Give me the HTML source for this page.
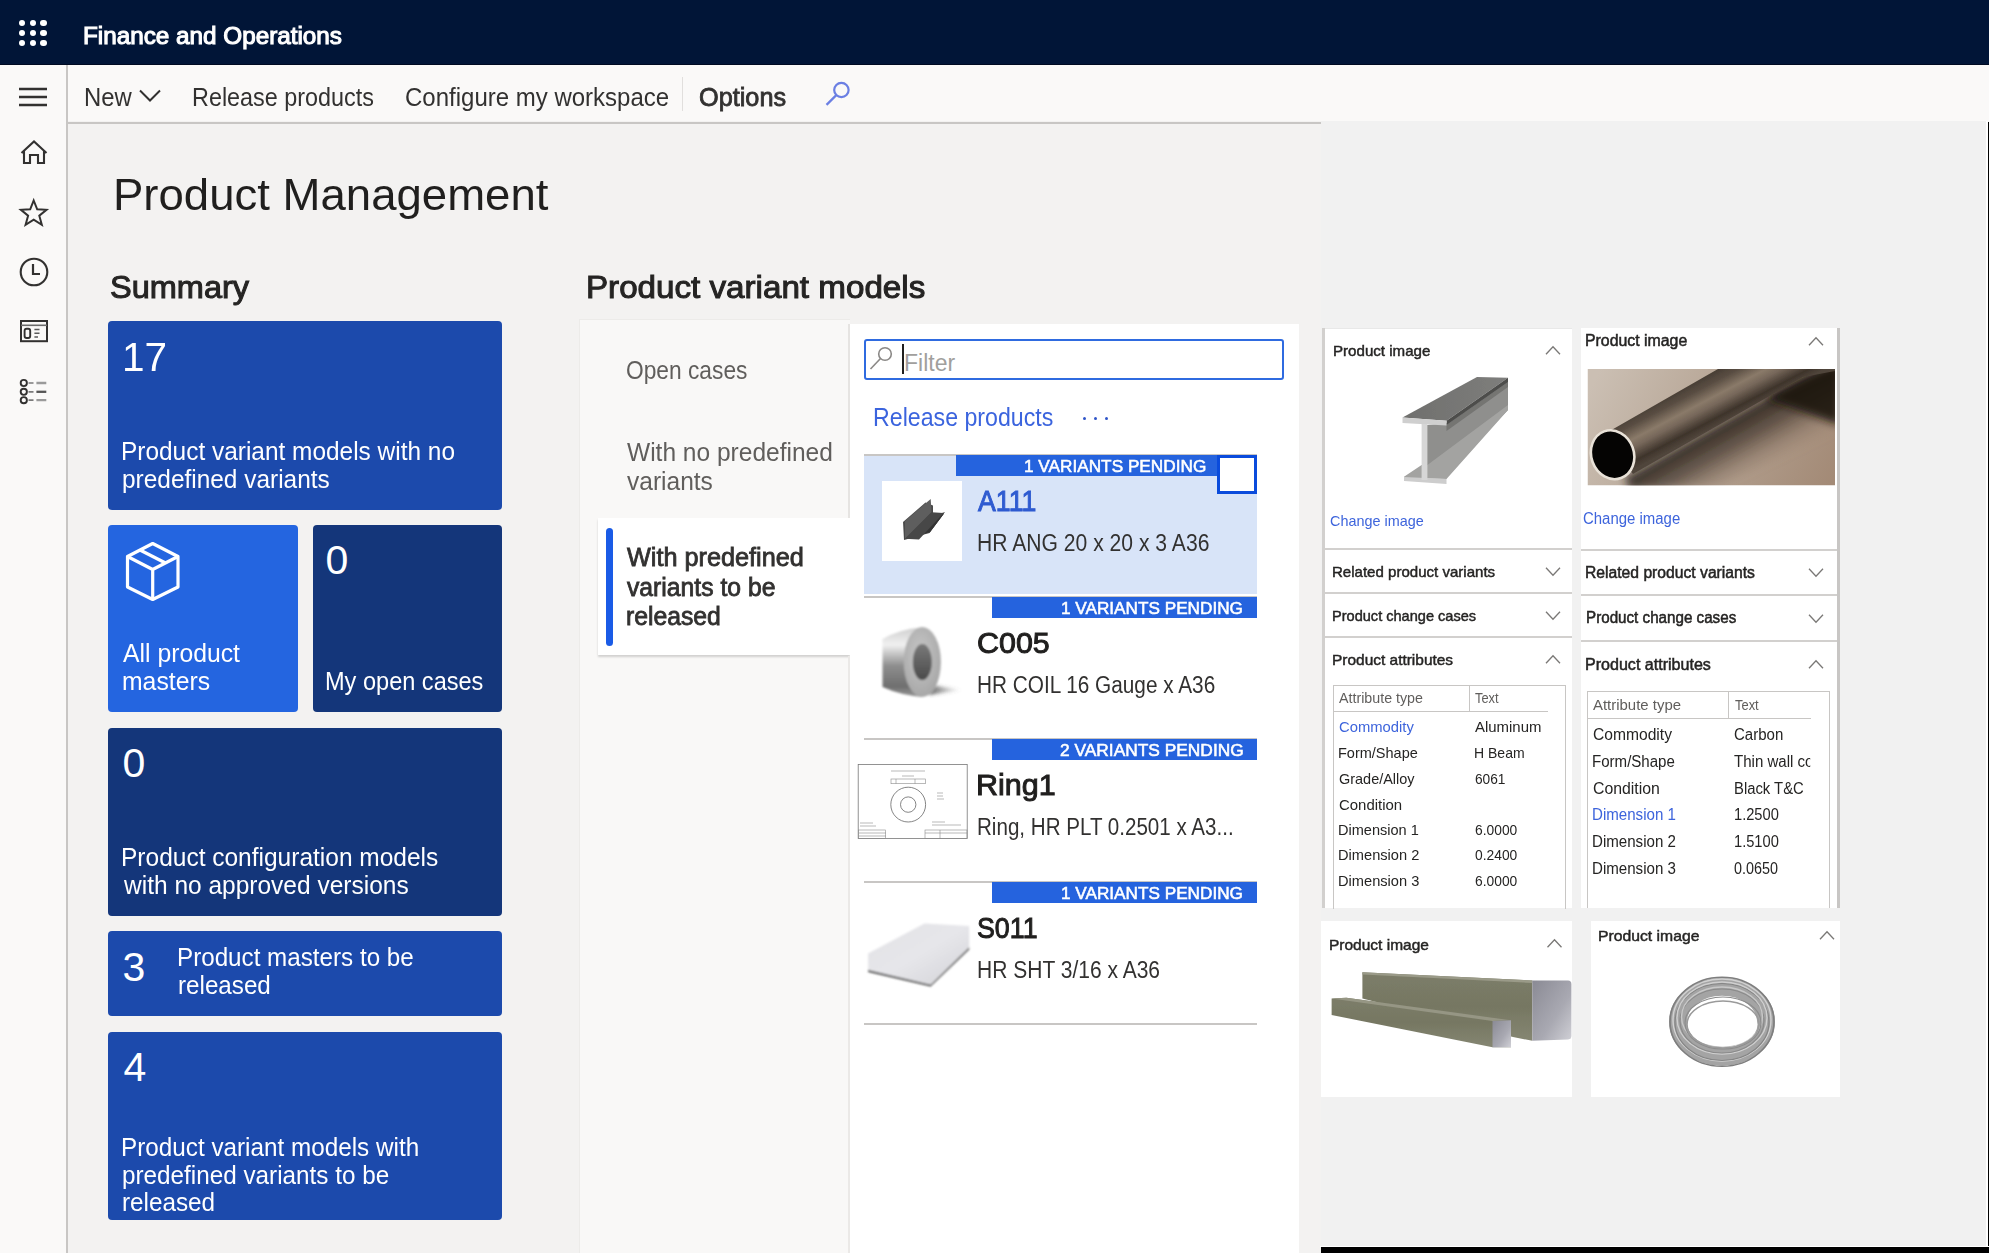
<!DOCTYPE html>
<html><head><meta charset="utf-8"><style>
*{margin:0;padding:0;box-sizing:border-box}
html,body{width:1989px;height:1253px;overflow:hidden;background:#f3f2f1;font-family:"Liberation Sans", sans-serif}
.a{position:absolute}
.t{position:absolute;white-space:nowrap;line-height:1;transform-origin:0 0}
</style></head><body>
<div class="a" style="left:1321px;top:121px;width:668px;height:1132px;background:#f1f1f1;"></div>
<div class="a" style="left:0px;top:0px;width:1989px;height:64px;background:#011537;"></div>
<div class="a" style="left:0px;top:64px;width:1989px;height:1px;background:#000a22;"></div>
<div class="a" style="left:0px;top:65px;width:68px;height:1188px;background:#faf9f8;"></div>
<div class="a" style="left:66px;top:65px;width:2px;height:1188px;background:#c8c6c4;"></div>
<div class="a" style="left:68px;top:65px;width:1921px;height:56px;background:#faf9f8;"></div>
<div class="a" style="left:68px;top:122px;width:1253px;height:2px;background:#c8c6c4;"></div>
<div class="a" style="left:682px;top:77px;width:1px;height:34px;background:#e1dfdd;"></div>
<div class="a" style="left:1986px;top:121px;width:2px;height:1132px;background:#ffffff;"></div>
<div class="a" style="left:1988px;top:121.5px;width:1px;height:1131.5px;background:#000000;"></div>
<div class="a" style="left:1320px;top:1246px;width:669px;height:1px;background:#ffffff;"></div>
<div class="a" style="left:1321px;top:1247px;width:668px;height:6px;background:#000000;"></div>
<div class="a" style="left:19.3px;top:19.9px;width:6.2px;height:6.2px;border-radius:50%;background:#fff"></div>
<div class="a" style="left:30.1px;top:19.9px;width:6.2px;height:6.2px;border-radius:50%;background:#fff"></div>
<div class="a" style="left:40.4px;top:19.9px;width:6.2px;height:6.2px;border-radius:50%;background:#fff"></div>
<div class="a" style="left:19.3px;top:30.1px;width:6.2px;height:6.2px;border-radius:50%;background:#fff"></div>
<div class="a" style="left:30.1px;top:30.1px;width:6.2px;height:6.2px;border-radius:50%;background:#fff"></div>
<div class="a" style="left:40.4px;top:30.1px;width:6.2px;height:6.2px;border-radius:50%;background:#fff"></div>
<div class="a" style="left:19.3px;top:40.3px;width:6.2px;height:6.2px;border-radius:50%;background:#fff"></div>
<div class="a" style="left:30.1px;top:40.3px;width:6.2px;height:6.2px;border-radius:50%;background:#fff"></div>
<div class="a" style="left:40.4px;top:40.3px;width:6.2px;height:6.2px;border-radius:50%;background:#fff"></div>
<svg class="a" style="left:0;top:66px" width="66" height="360" viewBox="0 66 66 360" fill="none" stroke="#323130" stroke-width="2.1">
<path d="M19 89H47M19 97H47M19 105H47" stroke-width="2.6"/>
<path d="M21.5 153L34 141.5L46.5 153M24 151V163H30V155H38V163H44V151" stroke-linejoin="miter"/>
<path d="M33.7 200.5L37.2 209.3L46.5 209.8L39.3 215.7L41.8 224.8L33.7 219.6L25.6 224.8L28.1 215.7L20.9 209.8L30.2 209.3Z" stroke-width="2" stroke-linejoin="miter"/>
<circle cx="34" cy="272" r="13.3" stroke-width="2.1"/>
<path d="M33 264V274H40" stroke-width="2.2"/>
<rect x="21" y="321" width="26" height="20.2" stroke-width="2"/>
<path d="M21 325.3H47" stroke-width="1.6" stroke="#6a6a6a"/>
<rect x="24.6" y="328.8" width="5.6" height="9.2" rx="2" stroke-width="1.9"/>
<path d="M34.4 329.5H39.5M34.4 333.3H39.5M34.4 337H38" stroke-width="1.6" stroke="#5a5a5a"/>
<circle cx="23.8" cy="383" r="3.1" stroke-width="1.9"/>
<circle cx="23.8" cy="391.8" r="3.1" stroke-width="1.9"/>
<circle cx="23.8" cy="400.2" r="3.1" stroke-width="1.9"/>
<path d="M28.5 383H33.5M28.5 391.8H33.5M28.5 400.2H33.5" stroke-width="1.7" stroke="#7a7a7a"/>
<path d="M36.4 383H46.3M36.4 400.2H46.3" stroke-width="2.3" stroke="#9a9a9a"/>
<path d="M36.4 391.8H46.3" stroke-width="2.3" stroke="#555"/>
</svg>
<svg class="a" style="left:130px;top:80px" width="40" height="30" viewBox="130 80 40 30" fill="none" stroke="#323130" stroke-width="2">
<path d="M140 90.5L150 100.5L160 90.5"/></svg>
<svg class="a" style="left:820px;top:76px" width="35" height="35" viewBox="820 76 35 35" fill="none" stroke="#6b7fe3" stroke-width="2.2">
<circle cx="841.4" cy="90" r="7.2"/><path d="M836.3 95.1L826.5 104.9"/></svg>
<div class="a" style="left:108px;top:320.5px;width:393.5px;height:189.0px;background:#1c4aac;border-radius:4px"></div>
<div class="a" style="left:108px;top:525px;width:190.2px;height:187px;background:#2465e0;border-radius:4px"></div>
<div class="a" style="left:313px;top:525px;width:188.5px;height:187px;background:#14367a;border-radius:4px"></div>
<div class="a" style="left:108px;top:727.5px;width:393.5px;height:188.5px;background:#14367a;border-radius:4px"></div>
<div class="a" style="left:108px;top:931px;width:393.5px;height:85px;background:#1c4aac;border-radius:4px"></div>
<div class="a" style="left:108px;top:1031.5px;width:393.5px;height:188.5px;background:#1c4aac;border-radius:4px"></div>
<svg class="a" style="left:120px;top:536px" width="66" height="70" viewBox="120 536 66 70" fill="none" stroke="#fff" stroke-width="3.2" stroke-linejoin="round">
<path d="M152.7 543.5L178 556.5V587L152.7 599.5L127.5 587V556.5Z"/>
<path d="M127.5 556.5L152.7 569.5L178 556.5M152.7 569.5V599.5"/>
<path d="M140 550L165.5 563"/>
</svg>
<div class="a" style="left:578.5px;top:318.5px;width:271.5px;height:934.5px;background:#ecebe9;"></div>
<div class="a" style="left:580px;top:320px;width:270px;height:933px;background:#f9f8f7;"></div>
<div class="a" style="left:597.5px;top:518px;width:252.5px;height:136.5px;background:#fff;box-shadow:0 1.5px 2px rgba(0,0,0,0.16)"></div>
<div class="a" style="left:605.5px;top:528px;width:7.5px;height:117.5px;background:#1a5be6;border-radius:4px"></div>
<div class="a" style="left:850px;top:324px;width:448.5px;height:929px;background:#ffffff;"></div>
<div class="a" style="left:847.5px;top:324px;width:2.0px;height:194px;background:#e6e4e2;"></div>
<div class="a" style="left:848px;top:656px;width:1.5px;height:597px;background:#ebe9e7;"></div>
<div class="a" style="left:864px;top:338.5px;width:420px;height:41.2px;border:2.3px solid #2f6be0;border-radius:3px;background:#fff"></div>
<svg class="a" style="left:866px;top:342px" width="32" height="34" viewBox="866 342 32 34" fill="none" stroke="#8a8886" stroke-width="1.6">
<circle cx="885" cy="354" r="6.3"/><path d="M880.5 358.5L870.5 369"/></svg>
<div class="a" style="left:901.5px;top:344px;width:2.2999999999999545px;height:30px;background:#201f1e;"></div>
<div class="a" style="left:1082.5px;top:416.7px;width:3.6px;height:3.6px;border-radius:50%;background:#2f55c8"></div>
<div class="a" style="left:1093.5px;top:416.7px;width:3.6px;height:3.6px;border-radius:50%;background:#2f55c8"></div>
<div class="a" style="left:1104.5px;top:416.7px;width:3.6px;height:3.6px;border-radius:50%;background:#2f55c8"></div>
<div class="a" style="left:864px;top:455px;width:392.5px;height:139px;background:#d8e4f8;"></div>
<div class="a" style="left:864px;top:454px;width:393px;height:2px;background:#c8c6c4;"></div>
<div class="a" style="left:955.7px;top:455px;width:301.29999999999995px;height:21.30000000000001px;background:#2563de;"></div>
<div class="a" style="left:864px;top:596px;width:393px;height:2px;background:#c8c6c4;"></div>
<div class="a" style="left:992px;top:597px;width:265px;height:21.299999999999955px;background:#2563de;"></div>
<div class="a" style="left:864px;top:738px;width:393px;height:2px;background:#c8c6c4;"></div>
<div class="a" style="left:992px;top:739px;width:265px;height:21.299999999999955px;background:#2563de;"></div>
<div class="a" style="left:864px;top:880.6px;width:393px;height:2.0px;background:#c8c6c4;"></div>
<div class="a" style="left:992px;top:881.6px;width:265px;height:21.299999999999955px;background:#2563de;"></div>
<div class="a" style="left:864px;top:1022.7px;width:393px;height:2.0px;background:#c8c6c4;"></div>
<div class="a" style="left:881.5px;top:480.5px;width:80.5px;height:80.0px;background:#ffffff;"></div>
<svg class="a" style="left:881px;top:480px" width="82" height="82" viewBox="881 480 82 82">
<defs><linearGradient id="ag" x1="0" y1="0" x2="1" y2="1"><stop offset="0" stop-color="#555"/><stop offset="1" stop-color="#3a3a3a"/></linearGradient></defs>
<path d="M903 522L925.5 502.5L933 505.5V516L945 512L929.5 533L904 540Z" fill="url(#ag)"/>
<path d="M904 523L926 505L926 519L944 513.5L930 532L905 539Z" fill="#4a4a4a"/>
<path d="M926 519L944 513.5L930 532L907 538Z" fill="#333"/>
</svg>
<div class="a" style="left:1322px;top:328px;width:250px;height:580px;background:#ffffff;"></div>
<div class="a" style="left:1322px;top:328px;width:2.5px;height:580px;background:#d2d0ce;"></div>
<div class="a" style="left:1324.5px;top:328px;width:247.5px;height:1px;background:#e8e8e8;"></div>
<div class="a" style="left:1324.5px;top:547.5px;width:247.5px;height:2.0px;background:#d2d0ce;"></div>
<div class="a" style="left:1324.5px;top:592px;width:247.5px;height:2px;background:#d2d0ce;"></div>
<div class="a" style="left:1324.5px;top:636px;width:247.5px;height:2px;background:#d2d0ce;"></div>
<div class="a" style="left:1333px;top:684.5px;width:232.5px;height:224px;border:1.5px solid #c8c6c4;border-bottom:none"></div>
<div class="a" style="left:1468.5px;top:685px;width:1.2999999999999545px;height:26px;background:#c8c6c4;"></div>
<div class="a" style="left:1334px;top:710.8px;width:213.5px;height:1.5px;background:#c8c6c4;"></div>
<div class="a" style="left:1581px;top:328px;width:256px;height:580px;background:#ffffff;"></div>
<div class="a" style="left:1836.5px;top:328px;width:3.0px;height:580px;background:#c8c6c4;"></div>
<div class="a" style="left:1581px;top:548.5px;width:255.5px;height:2.0px;background:#d2d0ce;"></div>
<div class="a" style="left:1581px;top:594px;width:255.5px;height:2px;background:#d2d0ce;"></div>
<div class="a" style="left:1581px;top:640px;width:255.5px;height:2px;background:#d2d0ce;"></div>
<div class="a" style="left:1587px;top:691px;width:243px;height:217px;border:1.5px solid #c8c6c4;border-bottom:none"></div>
<div class="a" style="left:1727.5px;top:691.5px;width:1.2999999999999545px;height:26.5px;background:#c8c6c4;"></div>
<div class="a" style="left:1588px;top:717.8px;width:223px;height:1.5px;background:#c8c6c4;"></div>
<div class="a" style="left:1321px;top:921px;width:251px;height:175.5px;background:#ffffff;"></div>
<div class="a" style="left:1591px;top:921px;width:249px;height:175.5px;background:#ffffff;"></div>
<svg class="a" style="left:1300px;top:320px" width="560" height="640" viewBox="1300 320 560 640"><path d="M1546.0 354.3L1553.0 346.7L1560.0 354.3" stroke="#7a7876" stroke-width="1.3" fill="none"/><path d="M1546.0 567.7L1553.0 575.3L1560.0 567.7" stroke="#7a7876" stroke-width="1.3" fill="none"/><path d="M1546.0 611.7L1553.0 619.3L1560.0 611.7" stroke="#7a7876" stroke-width="1.3" fill="none"/><path d="M1546.0 663.3L1553.0 655.7L1560.0 663.3" stroke="#7a7876" stroke-width="1.3" fill="none"/><path d="M1809.0 345.3L1816.0 337.7L1823.0 345.3" stroke="#7a7876" stroke-width="1.3" fill="none"/><path d="M1809.0 568.7L1816.0 576.3L1823.0 568.7" stroke="#7a7876" stroke-width="1.3" fill="none"/><path d="M1809.0 614.7L1816.0 622.3L1823.0 614.7" stroke="#7a7876" stroke-width="1.3" fill="none"/><path d="M1809.0 668.3L1816.0 660.7L1823.0 668.3" stroke="#7a7876" stroke-width="1.3" fill="none"/></svg>
<svg class="a" style="left:1300px;top:920px" width="560" height="60" viewBox="1300 920 560 60"><path d="M1547.5 947.3L1554.5 939.7L1561.5 947.3" stroke="#7a7876" stroke-width="1.3" fill="none"/><path d="M1820.0 939.3L1827.0 931.7L1834.0 939.3" stroke="#7a7876" stroke-width="1.3" fill="none"/></svg>
<svg class="a" style="left:850px;top:470px" width="130" height="530" viewBox="850 470 130 530">
<defs>
<linearGradient id="cyl" x1="0" y1="0" x2="0" y2="1"><stop offset="0" stop-color="#cfcfcf"/><stop offset="0.25" stop-color="#f0f0f0"/><stop offset="0.55" stop-color="#8e8e8e"/><stop offset="0.85" stop-color="#6f6f6f"/><stop offset="1" stop-color="#9a9a9a"/></linearGradient>
<radialGradient id="face" cx="0.45" cy="0.4" r="0.7"><stop offset="0" stop-color="#c8c8c8"/><stop offset="1" stop-color="#a2a2a2"/></radialGradient>
<linearGradient id="hole" x1="0" y1="0" x2="0" y2="1"><stop offset="0" stop-color="#7a7a7a"/><stop offset="1" stop-color="#4a4a4a"/></linearGradient>
<linearGradient id="shd" x1="0" y1="0" x2="1" y2="0"><stop offset="0" stop-color="#333" stop-opacity="0.9"/><stop offset="1" stop-color="#777" stop-opacity="0"/></linearGradient>
<linearGradient id="sheet" x1="0" y1="0" x2="1" y2="1"><stop offset="0" stop-color="#e2e2e5"/><stop offset="0.5" stop-color="#e6e6ea"/><stop offset="1" stop-color="#d3d3d7"/></linearGradient>
<filter id="bl1"><feGaussianBlur stdDeviation="0.8"/></filter>
<filter id="bl2"><feGaussianBlur stdDeviation="1.6"/></filter>
</defs>
<path d="M930.7 498.9L905 521.2L905 538.7L931.5 512.2Z" fill="#5e5e5e"/>
<path d="M931.5 512.2L943.6 512.9L919 539.4L905 538.7Z" fill="#474747"/>
<g filter="url(#bl1)">
<path d="M929 695L962 690L925 684Z" fill="url(#shd)" filter="url(#bl2)"/>
<path d="M882.5 639Q900 629 921.5 627.5L922 697Q900 695 882.5 687Z" fill="url(#cyl)"/>
<ellipse cx="922.3" cy="662" rx="18.6" ry="35" fill="url(#face)"/>
<ellipse cx="922.3" cy="662" rx="9.5" ry="18" fill="url(#hole)"/>
</g>
<g fill="none" stroke="#8a8a8a" stroke-width="0.6">
<rect x="858.2" y="764.6" width="109" height="74" stroke-width="0.8" stroke="#777"/>
<circle cx="908.2" cy="804.6" r="17.4" stroke-width="0.8" stroke="#666"/>
<circle cx="908.2" cy="804.6" r="7.7" stroke-width="0.8" stroke="#666"/>
<rect x="891" y="779" width="34.4" height="4.7"/>
<path d="M896 779V783.7M915 779V783.7M891 771H925M902 776H914"/>
<rect x="858.5" y="830" width="27" height="8.5"/>
<rect x="925" y="830" width="42" height="8.5"/>
<path d="M859 833H886M859 836H886M925 833H967M940 830V838.5M860 823H873M860 826H876M932 822H945M932 825H961M937 793H943M937 796H943M937 799H944"/>
</g>
<g filter="url(#bl1)">
<path d="M868.1 969.7L930.6 984.6L969.2 947L969.2 949.5L930.6 986.5L868.1 972Z" fill="#4a4a4a"/>
<path d="M868.1 953.4L924.5 923.6L969.2 926L969.2 947L930.6 984.6L868.1 969.7Z" fill="url(#sheet)"/>
</g>
</svg>
<svg class="a" style="left:1320px;top:360px" width="530" height="140" viewBox="1320 360 530 140">
<defs>
<linearGradient id="pbg" x1="0" y1="0" x2="1" y2="1"><stop offset="0" stop-color="#c3b8ad"/><stop offset="0.5" stop-color="#b2a293"/><stop offset="1" stop-color="#9d8574"/></linearGradient>
<linearGradient id="pipe" x1="0" y1="1" x2="0.35" y2="0"><stop offset="0" stop-color="#2e2720"/><stop offset="0.45" stop-color="#7d6e60"/><stop offset="0.7" stop-color="#5b4f45"/><stop offset="1" stop-color="#3a322b"/></linearGradient>
<linearGradient id="pshd" x1="0" y1="0" x2="0.3" y2="1"><stop offset="0" stop-color="#2a221c" stop-opacity="0.95"/><stop offset="1" stop-color="#9d8574" stop-opacity="0"/></linearGradient>
<linearGradient id="ib1" x1="0" y1="0" x2="1" y2="0"><stop offset="0" stop-color="#6f6f6d"/><stop offset="1" stop-color="#7e7e7c"/></linearGradient>
<filter id="bl3"><feGaussianBlur stdDeviation="0.6"/></filter>
<filter id="bl4"><feGaussianBlur stdDeviation="5"/></filter>
</defs>
<g filter="url(#bl3)">
<path d="M1427 425L1446.5 423L1508 380L1508 410L1446.5 474L1427 476Z" fill="#8f8f8d"/>
<path d="M1446.5 425L1508 382L1508 387L1446.5 431Z" fill="#747472"/>
<path d="M1402.5 417.4L1477 377L1508 377.7L1446.5 420.8Z" fill="url(#ib1)"/>
<path d="M1446.5 420.8L1508 377.7L1508 382L1446.5 425Z" fill="#4e4e4c"/>
<path d="M1402.5 417.4L1446.5 420.8L1446.5 425.5L1402.5 423Z" fill="#cfcfcf"/>
<path d="M1404 476.8L1421.6 465L1427.4 465L1508 405L1508 410L1446.5 479L1404 478Z" fill="#a3a3a1"/>
<path d="M1404 477L1446.5 479L1446.5 484L1404 481Z" fill="#cdcdcd"/>
<rect x="1421.6" y="424" width="5.8" height="56" fill="#d6d6d6"/>
</g>
<svg x="1587.5" y="369" width="247.5" height="116.5" viewBox="1587.5 369 247.5 116.5" overflow="hidden">
<defs>
<linearGradient id="pbg2" gradientUnits="userSpaceOnUse" x1="1600" y1="369" x2="1830" y2="485"><stop offset="0" stop-color="#cbbfb3"/><stop offset="0.45" stop-color="#b7a696"/><stop offset="1" stop-color="#a38a76"/></linearGradient>
<linearGradient id="pipe2" gradientUnits="userSpaceOnUse" x1="1650" y1="404.8" x2="1673.2" y2="448.9"><stop offset="0" stop-color="#473d34"/><stop offset="0.2" stop-color="#5a4e43"/><stop offset="0.45" stop-color="#8a7a69"/><stop offset="0.6" stop-color="#76675a"/><stop offset="0.85" stop-color="#3e342b"/><stop offset="1" stop-color="#50453b"/></linearGradient>
<linearGradient id="pshd2" gradientUnits="userSpaceOnUse" x1="1700" y1="430" x2="1735" y2="492"><stop offset="0" stop-color="#1b1510" stop-opacity="0.95"/><stop offset="0.45" stop-color="#3a2e25" stop-opacity="0.6"/><stop offset="1" stop-color="#a38a76" stop-opacity="0"/></linearGradient>
<filter id="bl6" x="-50%" y="-50%" width="200%" height="200%"><feGaussianBlur stdDeviation="4"/></filter>
<filter id="bl7"><feGaussianBlur stdDeviation="0.5"/></filter>
</defs>
<rect x="1587.5" y="369" width="247.5" height="116.5" fill="url(#pbg2)"/>
<path d="M1625 478L1803 377L1840 365L1840 430L1720 486L1630 490Z" fill="url(#pshd2)" filter="url(#bl6)"/>
<path d="M1765 398L1840 360L1840 425Z" fill="#1a140f" opacity="0.9" filter="url(#bl6)"/>
<path d="M1601 436L1718 369L1835 369L1835 371L1803 377L1633 474Z" fill="url(#pipe2)" filter="url(#bl7)"/>
<ellipse cx="1612.6" cy="454.7" rx="21.3" ry="24.8" transform="rotate(-20 1612.6 454.7)" fill="#050403" stroke="#e9e2d8" stroke-width="2.6"/>
</svg>
</svg>
<svg class="a" style="left:1320px;top:960px" width="530" height="120" viewBox="1320 960 530 120">
<defs>
<linearGradient id="bar" x1="0" y1="0" x2="0" y2="1"><stop offset="0" stop-color="#7c7d69"/><stop offset="0.5" stop-color="#767762"/><stop offset="1" stop-color="#858672"/></linearGradient>
<linearGradient id="bend" x1="0" y1="0" x2="1" y2="1"><stop offset="0" stop-color="#8a8a94"/><stop offset="0.6" stop-color="#a9a9b2"/><stop offset="1" stop-color="#d0d0d6"/></linearGradient>
<radialGradient id="coil" cx="0.5" cy="0.5" r="0.5"><stop offset="0.55" stop-color="#fff"/><stop offset="0.62" stop-color="#9a9a9a"/><stop offset="0.72" stop-color="#d8d8d8"/><stop offset="0.8" stop-color="#8a8a8a"/><stop offset="0.88" stop-color="#cfcfcf"/><stop offset="0.95" stop-color="#7a7a7a"/><stop offset="1" stop-color="#fff" stop-opacity="0"/></radialGradient>
<filter id="bl5"><feGaussianBlur stdDeviation="0.7"/></filter>
</defs>
<g filter="url(#bl5)">
<path d="M1362.4 972.2L1532.3 980.5L1532.3 1040.8L1513 1037L1362.4 998.5Z" fill="url(#bar)"/>
<path d="M1362.4 972.2L1532.3 980.5L1532.3 983L1362.4 974.5Z" fill="#9a9a88"/>
<path d="M1532.3 980.5L1568 980.5Q1571.4 980.5 1571.4 984L1571.4 1036Q1571.4 1039 1568 1039.5L1532.3 1040.8Z" fill="url(#bend)"/>
<path d="M1331.6 998.5L1346.4 997.8L1511 1020.3L1511 1047.2L1492.5 1047.2L1331.6 1015Z" fill="url(#bar)"/>
<path d="M1331.6 998.5L1346.4 997.8L1511 1020.3L1492.5 1021Z" fill="#969684"/>
<path d="M1492.5 1021L1511 1020.3L1511 1047.2L1492.5 1047.2Z" fill="url(#bend)"/>
</g>
<g fill="none" filter="url(#bl5)">
<ellipse cx="1722" cy="1021.8" rx="44" ry="35" stroke="#a4a4a4" stroke-width="18"/>
<ellipse cx="1722" cy="1021.8" rx="52" ry="44.5" stroke="#7e7e7e" stroke-width="1.6"/>
<ellipse cx="1722" cy="1020" rx="49" ry="41" stroke="#d2d2d2" stroke-width="1.4"/>
<ellipse cx="1722" cy="1022" rx="47" ry="38.5" stroke="#858585" stroke-width="1.2"/>
<ellipse cx="1722" cy="1018" rx="45" ry="36" stroke="#cfcfcf" stroke-width="1.4"/>
<ellipse cx="1722" cy="1021" rx="42" ry="32" stroke="#8a8a8a" stroke-width="1.2"/>
<ellipse cx="1722" cy="1017" rx="40.5" ry="30" stroke="#c8c8c8" stroke-width="1.4"/>
<ellipse cx="1723" cy="1023" rx="38" ry="26" stroke="#8c8c8c" stroke-width="1.2"/>
<ellipse cx="1723" cy="1024.5" rx="36" ry="23.5" stroke="#9a9a9a" stroke-width="1.5"/>
</g>
<ellipse cx="1723" cy="1024.5" rx="34.5" ry="22" fill="#fff" filter="url(#bl5)"/>
</svg>
<div class="t" style="top:25.2px;font-size:23px;font-weight:400;color:#ffffff;-webkit-text-stroke:0.75px #ffffff;left:83.4px;transform:scaleX(1.055);-webkit-text-stroke:1.05px #fff;">Finance and Operations</div><div class="t" style="top:84.9px;font-size:25px;font-weight:400;color:#323130;left:83.7px;transform:scaleX(0.954);">New</div><div class="t" style="top:84.9px;font-size:25px;font-weight:400;color:#323130;left:191.7px;transform:scaleX(0.935);">Release products</div><div class="t" style="top:84.9px;font-size:25px;font-weight:400;color:#323130;left:404.5px;transform:scaleX(0.960);">Configure my workspace</div><div class="t" style="top:84.8px;font-size:25px;font-weight:400;color:#323130;-webkit-text-stroke:0.80px #323130;left:699.4px;transform:scaleX(1.011);">Options</div><div class="t" style="top:172.2px;font-size:45px;font-weight:400;color:#201f1e;left:112.6px;transform:scaleX(1.012);">Product Management</div><div class="t" style="top:271.6px;font-size:31px;font-weight:400;color:#252423;-webkit-text-stroke:1.00px #252423;left:110.0px;transform:scaleX(1.049);">Summary</div><div class="t" style="top:271.8px;font-size:31px;font-weight:400;color:#252423;-webkit-text-stroke:1.00px #252423;left:586.0px;transform:scaleX(1.070);">Product variant models</div><div class="t" style="top:336.8px;font-size:41px;font-weight:400;color:#ffffff;left:122.0px;transform:scaleX(0.988);">17</div><div class="t" style="top:439.3px;font-size:25px;font-weight:400;color:#ffffff;left:120.8px;transform:scaleX(0.977);">Product variant models with no</div><div class="t" style="top:466.8px;font-size:25px;font-weight:400;color:#ffffff;left:121.8px;transform:scaleX(0.977);">predefined variants</div><div class="t" style="top:641.4px;font-size:25px;font-weight:400;color:#ffffff;left:122.8px;transform:scaleX(0.990);">All product</div><div class="t" style="top:668.8px;font-size:25px;font-weight:400;color:#ffffff;left:121.8px;transform:scaleX(0.990);">masters</div><div class="t" style="top:540.3px;font-size:41px;font-weight:400;color:#ffffff;left:325.6px;">0</div><div class="t" style="top:668.8px;font-size:25px;font-weight:400;color:#ffffff;left:324.7px;transform:scaleX(0.942);">My open cases</div><div class="t" style="top:743.2px;font-size:41px;font-weight:400;color:#ffffff;left:122.5px;">0</div><div class="t" style="top:844.7px;font-size:25px;font-weight:400;color:#ffffff;left:120.7px;transform:scaleX(0.980);">Product configuration models</div><div class="t" style="top:873.2px;font-size:25px;font-weight:400;color:#ffffff;left:123.7px;transform:scaleX(0.980);">with no approved versions</div><div class="t" style="top:947.3px;font-size:41px;font-weight:400;color:#ffffff;left:122.5px;">3</div><div class="t" style="top:945.3px;font-size:25px;font-weight:400;color:#ffffff;left:176.9px;transform:scaleX(0.968);">Product masters to be</div><div class="t" style="top:972.5px;font-size:25px;font-weight:400;color:#ffffff;left:177.8px;transform:scaleX(0.968);">released</div><div class="t" style="top:1047.0px;font-size:41px;font-weight:400;color:#ffffff;left:123.5px;">4</div><div class="t" style="top:1134.7px;font-size:25px;font-weight:400;color:#ffffff;left:120.8px;transform:scaleX(0.971);">Product variant models with</div><div class="t" style="top:1163.2px;font-size:25px;font-weight:400;color:#ffffff;left:121.7px;transform:scaleX(0.971);">predefined variants to be</div><div class="t" style="top:1190.4px;font-size:25px;font-weight:400;color:#ffffff;left:121.7px;transform:scaleX(0.971);">released</div><div class="t" style="top:357.8px;font-size:25px;font-weight:400;color:#605e5c;left:626.1px;transform:scaleX(0.910);">Open cases</div><div class="t" style="top:439.8px;font-size:25px;font-weight:400;color:#605e5c;left:627.0px;transform:scaleX(0.981);">With no predefined</div><div class="t" style="top:469.4px;font-size:25px;font-weight:400;color:#605e5c;left:627.0px;transform:scaleX(0.981);">variants</div><div class="t" style="top:544.5px;font-size:25px;font-weight:400;color:#323130;-webkit-text-stroke:0.80px #323130;left:627.0px;transform:scaleX(1.010);">With predefined</div><div class="t" style="top:574.8px;font-size:25px;font-weight:400;color:#323130;-webkit-text-stroke:0.80px #323130;left:627.0px;transform:scaleX(0.989);">variants to be</div><div class="t" style="top:604.2px;font-size:25px;font-weight:400;color:#323130;-webkit-text-stroke:0.80px #323130;left:626.0px;transform:scaleX(0.989);">released</div><div class="t" style="top:351.5px;font-size:23px;font-weight:400;color:#a19f9d;left:904.0px;">Filter</div><div class="t" style="top:404.5px;font-size:25px;font-weight:400;color:#3b64de;left:873.1px;transform:scaleX(0.927);">Release products</div><div class="t" style="top:486.4px;font-size:30px;font-weight:400;color:#2f5bd0;-webkit-text-stroke:1.00px #2f5bd0;left:978.0px;transform:scaleX(0.889);">A111</div><div class="t" style="top:532.3px;font-size:23px;font-weight:400;color:#323130;left:977.1px;transform:scaleX(0.918);">HR ANG 20 x 20 x 3 A36</div><div class="t" style="top:457.9px;font-size:17px;font-weight:400;color:#ffffff;-webkit-text-stroke:0.55px #ffffff;left:1024.0px;transform:scaleX(1.012);">1 VARIANTS PENDING</div><div class="t" style="top:628.4px;font-size:30px;font-weight:400;color:#201f1e;-webkit-text-stroke:1.00px #201f1e;left:977.0px;transform:scaleX(1.014);">C005</div><div class="t" style="top:674.3px;font-size:23px;font-weight:400;color:#323130;left:977.1px;transform:scaleX(0.903);">HR COIL 16 Gauge x A36</div><div class="t" style="top:599.9px;font-size:17px;font-weight:400;color:#ffffff;-webkit-text-stroke:0.55px #ffffff;left:1061.4px;transform:scaleX(1.010);">1 VARIANTS PENDING</div><div class="t" style="top:770.4px;font-size:30px;font-weight:400;color:#201f1e;-webkit-text-stroke:1.00px #201f1e;left:976.0px;transform:scaleX(1.017);">Ring1</div><div class="t" style="top:816.3px;font-size:23px;font-weight:400;color:#323130;left:977.1px;transform:scaleX(0.895);">Ring, HR PLT 0.2501 x A3...</div><div class="t" style="top:741.9px;font-size:17px;font-weight:400;color:#ffffff;-webkit-text-stroke:0.55px #ffffff;left:1059.6px;transform:scaleX(1.020);">2 VARIANTS PENDING</div><div class="t" style="top:913.0px;font-size:30px;font-weight:400;color:#201f1e;-webkit-text-stroke:1.00px #201f1e;left:977.1px;transform:scaleX(0.892);">S011</div><div class="t" style="top:958.9px;font-size:23px;font-weight:400;color:#323130;left:977.1px;transform:scaleX(0.914);">HR SHT 3/16 x A36</div><div class="t" style="top:884.5px;font-size:17px;font-weight:400;color:#ffffff;-webkit-text-stroke:0.55px #ffffff;left:1061.4px;transform:scaleX(1.010);">1 VARIANTS PENDING</div><div class="t" style="top:342.5px;font-size:15px;font-weight:400;color:#252423;-webkit-text-stroke:0.45px #252423;left:1332.6px;transform:scaleX(1.007);">Product image</div><div class="t" style="top:512.8px;font-size:15px;font-weight:400;color:#3d64dc;left:1330.0px;transform:scaleX(0.960);">Change image</div><div class="t" style="top:564.0px;font-size:15px;font-weight:400;color:#252423;-webkit-text-stroke:0.45px #252423;left:1332.0px;transform:scaleX(1.003);">Related product variants</div><div class="t" style="top:608.3px;font-size:15px;font-weight:400;color:#252423;-webkit-text-stroke:0.45px #252423;left:1332.0px;transform:scaleX(0.971);">Product change cases</div><div class="t" style="top:652.3px;font-size:15px;font-weight:400;color:#252423;-webkit-text-stroke:0.45px #252423;left:1332.0px;transform:scaleX(1.030);">Product attributes</div><div class="t" style="top:691.1px;font-size:14px;font-weight:400;color:#605e5c;left:1339.3px;transform:scaleX(1.018);">Attribute type</div><div class="t" style="top:691.1px;font-size:14px;font-weight:400;color:#605e5c;left:1475.0px;transform:scaleX(0.919);">Text</div><div class="t" style="top:719.0px;font-size:15px;font-weight:400;color:#3d64dc;left:1339.2px;transform:scaleX(0.986);">Commodity</div><div class="t" style="top:719.0px;font-size:15px;font-weight:400;color:#252423;left:1474.8px;transform:scaleX(0.996);">Aluminum</div><div class="t" style="top:744.9px;font-size:15px;font-weight:400;color:#252423;left:1338.2px;transform:scaleX(0.967);">Form/Shape</div><div class="t" style="top:744.9px;font-size:15px;font-weight:400;color:#252423;left:1473.9px;transform:scaleX(0.934);">H Beam</div><div class="t" style="top:770.8px;font-size:15px;font-weight:400;color:#252423;left:1339.2px;transform:scaleX(0.964);">Grade/Alloy</div><div class="t" style="top:770.8px;font-size:15px;font-weight:400;color:#252423;left:1474.8px;transform:scaleX(0.914);">6061</div><div class="t" style="top:796.6px;font-size:15px;font-weight:400;color:#252423;left:1339.2px;transform:scaleX(0.996);">Condition</div><div class="t" style="top:821.5px;font-size:15px;font-weight:400;color:#252423;left:1338.2px;transform:scaleX(0.969);">Dimension 1</div><div class="t" style="top:821.5px;font-size:15px;font-weight:400;color:#252423;left:1474.8px;transform:scaleX(0.922);">6.0000</div><div class="t" style="top:847.3px;font-size:15px;font-weight:400;color:#252423;left:1338.2px;transform:scaleX(0.975);">Dimension 2</div><div class="t" style="top:847.3px;font-size:15px;font-weight:400;color:#252423;left:1474.8px;transform:scaleX(0.922);">0.2400</div><div class="t" style="top:873.3px;font-size:15px;font-weight:400;color:#252423;left:1338.2px;transform:scaleX(0.975);">Dimension 3</div><div class="t" style="top:873.3px;font-size:15px;font-weight:400;color:#252423;left:1474.8px;transform:scaleX(0.922);">6.0000</div><div class="t" style="top:332.5px;font-size:16px;font-weight:400;color:#252423;-webkit-text-stroke:0.50px #252423;left:1585.4px;transform:scaleX(0.991);">Product image</div><div class="t" style="top:510.5px;font-size:16px;font-weight:400;color:#3d64dc;left:1583.0px;transform:scaleX(0.934);">Change image</div><div class="t" style="top:564.5px;font-size:16px;font-weight:400;color:#252423;-webkit-text-stroke:0.50px #252423;left:1585.4px;transform:scaleX(0.980);">Related product variants</div><div class="t" style="top:610.1px;font-size:16px;font-weight:400;color:#252423;-webkit-text-stroke:0.50px #252423;left:1585.5px;transform:scaleX(0.949);">Product change cases</div><div class="t" style="top:656.5px;font-size:16px;font-weight:400;color:#252423;-webkit-text-stroke:0.50px #252423;left:1585.4px;transform:scaleX(1.004);">Product attributes</div><div class="t" style="top:697.0px;font-size:15px;font-weight:400;color:#605e5c;left:1592.9px;transform:scaleX(0.996);">Attribute type</div><div class="t" style="top:697.0px;font-size:15px;font-weight:400;color:#605e5c;left:1735.0px;transform:scaleX(0.861);">Text</div><div class="t" style="top:726.8px;font-size:16px;font-weight:400;color:#252423;left:1592.6px;transform:scaleX(0.976);">Commodity</div><div class="t" style="top:726.8px;font-size:16px;font-weight:400;color:#252423;left:1734.4px;transform:scaleX(0.938);">Carbon</div><div class="t" style="top:753.5px;font-size:16px;font-weight:400;color:#252423;left:1591.7px;transform:scaleX(0.941);">Form/Shape</div><div class="t" style="top:753.5px;font-size:16px;font-weight:400;color:#252423;left:1734.4px;transform:scaleX(0.941);width:81.4px;overflow:hidden;">Thin wall co</div><div class="t" style="top:780.5px;font-size:16px;font-weight:400;color:#252423;left:1592.6px;transform:scaleX(0.989);">Condition</div><div class="t" style="top:780.5px;font-size:16px;font-weight:400;color:#252423;left:1733.5px;transform:scaleX(0.927);">Black T&amp;C</div><div class="t" style="top:807.3px;font-size:16px;font-weight:400;color:#3d64dc;left:1591.7px;transform:scaleX(0.943);">Dimension 1</div><div class="t" style="top:807.3px;font-size:16px;font-weight:400;color:#252423;left:1733.5px;transform:scaleX(0.916);">1.2500</div><div class="t" style="top:834.1px;font-size:16px;font-weight:400;color:#252423;left:1591.7px;transform:scaleX(0.943);">Dimension 2</div><div class="t" style="top:834.1px;font-size:16px;font-weight:400;color:#252423;left:1733.5px;transform:scaleX(0.916);">1.5100</div><div class="t" style="top:860.9px;font-size:16px;font-weight:400;color:#252423;left:1591.7px;transform:scaleX(0.943);">Dimension 3</div><div class="t" style="top:860.9px;font-size:16px;font-weight:400;color:#252423;left:1734.4px;transform:scaleX(0.897);">0.0650</div><div class="t" style="top:936.8px;font-size:15px;font-weight:400;color:#252423;-webkit-text-stroke:0.45px #252423;left:1329.0px;transform:scaleX(1.033);">Product image</div><div class="t" style="top:928.3px;font-size:15px;font-weight:400;color:#252423;-webkit-text-stroke:0.45px #252423;left:1598.0px;transform:scaleX(1.049);">Product image</div>
<div class="a" style="left:1217px;top:454.6px;width:39.6px;height:39.4px;background:#fff;border:3.7px solid #0a4bdc"></div>
</body></html>
